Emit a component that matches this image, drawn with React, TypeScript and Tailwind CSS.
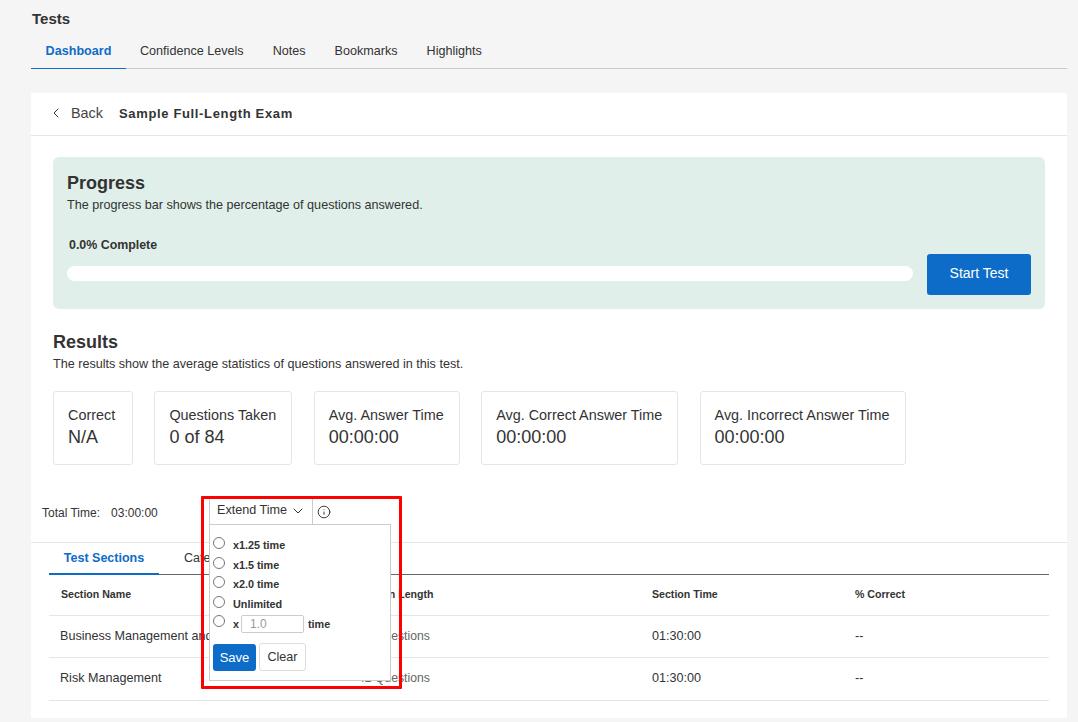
import { ChevronDown, ChevronLeft, Info } from "lucide-react";

const topTabs = ["Confidence Levels", "Notes", "Bookmarks", "Highlights"];

const stats = [
  { label: "Correct", value: "N/A", width: "w-[80px]" },
  { label: "Questions Taken", value: "0 of 84", width: "w-[138px]" },
  { label: "Avg. Answer Time", value: "00:00:00", width: "w-[146px]" },
  { label: "Avg. Correct Answer Time", value: "00:00:00", width: "w-[197px]" },
  { label: "Avg. Incorrect Answer Time", value: "00:00:00", width: "w-[206px]" },
];

const sections = [
  { name: "Business Management and Leadership", length: "42 Questions", time: "01:30:00", rowClass: "h-[42px]" },
  { name: "Risk Management", length: "42 Questions", time: "01:30:00", rowClass: "h-[43px] pb-[2px]" },
];

const extendOptions = ["x1.25 time", "x1.5 time", "x2.0 time", "Unlimited"];

function ExtendTimeMenu() {
  return (
    <div className="absolute left-[167px] top-[-9px] z-10 w-[182px]">
      {/* Trigger */}
      <div className="flex h-[27px] items-center">
        <div className="flex h-full w-[104px] items-center gap-[3px] border-x border-[#cccccc] bg-white pl-[7px] text-[12.6px] text-[#333333]">
          Extend Time
          <ChevronDown size={16} strokeWidth={1.5} />
        </div>
        <Info size={14} strokeWidth={1.6} className="ml-[4px] mt-[3px] text-[#333333]" />
      </div>

      {/* Panel */}
      <div className="flex h-[157px] flex-col border border-[#cccccc] bg-white pl-[3px] pt-[12px] text-[10.8px] font-bold text-[#333333]">
        {extendOptions.map((option) => (
          <label key={option} className="flex h-[19.5px] items-start gap-[8px]">
            <input type="radio" name="extend" className="m-0 h-[12px] w-[12px]" />
            <span>{option}</span>
          </label>
        ))}
        <label className="flex h-[20px] items-start gap-[8px]">
          <input type="radio" name="extend" className="m-0 h-[12px] w-[12px]" />
          <span className="mt-[1px]">x</span>
          <span className="-ml-[6px] flex h-[18px] w-[63px] items-center rounded-[2px] border border-[#cccccc] pl-[8px] text-[12px] font-normal text-[#9a9a9a]">
            1.0
          </span>
          <span className="-ml-[4px] mt-[1px]">time</span>
        </label>
        <div className="mt-[8px] flex items-start gap-[3px]">
          <button className="mt-[1px] h-[27px] w-[43px] rounded-[3px] bg-[#0d6cc7] text-[13px] font-normal text-white">
            Save
          </button>
          <button className="h-[28px] w-[47px] rounded-[3px] border border-[#dddddd] bg-white text-[12.6px] font-normal text-[#333333]">
            Clear
          </button>
        </div>
      </div>

      {/* Red annotation */}
      <div className="pointer-events-none absolute left-[-8px] top-[-1px] h-[193px] w-[201px] rounded-[1px] border-[3px] border-[#ff0000]" />
    </div>
  );
}

export default function App() {
  return (
    <div className="h-[722px] overflow-hidden bg-[#f5f5f5] pl-[31px] pr-[11px] pt-[10px] text-[#333333] [font-family:'Liberation_Sans',Arial,sans-serif]">
      <h1 className="pl-[1px] text-[15px] font-bold leading-[17px]">Tests</h1>

      {/* Top tabs */}
      <div className="mt-[6px] flex h-[36px] border-b border-[#cccccc] text-[12.6px]">
        <div className="-mb-px flex w-[95px] items-center justify-center border-b border-[#0d6cc7] pt-[2px] font-bold text-[#0d6cc7]">
          Dashboard
        </div>
        <div className="ml-[14px] flex gap-[29px]">
          {topTabs.map((tab) => (
            <div key={tab} className="flex items-center pt-[2px]">
              {tab}
            </div>
          ))}
        </div>
      </div>

      <div className="mt-[24px] h-[625px] bg-white">
        {/* Back header */}
        <div className="flex h-[43px] items-center border-b border-[#e5e5e5] pl-[21px]">
          <ChevronLeft size={16} strokeWidth={1.5} className="-ml-[4px] -mt-[2px]" />
          <span className="ml-[7px] text-[14.4px] text-[#444444]">Back</span>
          <span className="ml-[16px] text-[13px] font-bold tracking-[0.65px]">Sample Full-Length Exam</span>
        </div>

        {/* Progress */}
        <div className="mx-[22px] mt-[21px] flex h-[152px] rounded-[6px] bg-[#e0efe9] pl-[14px] pr-[14px]">
          <div className="flex-1 pt-[16px]">
            <h2 className="text-[18px] font-bold leading-[20px]">Progress</h2>
            <p className="mt-[5px] text-[12.6px] leading-[14px]">The progress bar shows the percentage of questions answered.</p>
            <p className="mt-[26px] pl-[2px] text-[12.4px] font-bold leading-[14px]">0.0% Complete</p>
            <div className="mt-[14px] h-[15px] rounded-full bg-white" />
          </div>
          <div className="ml-[14px] pt-[97px]">
            <button className="h-[41px] w-[104px] rounded-[3px] bg-[#0d6cc7] pb-[2px] text-[14px] text-white">Start Test</button>
          </div>
        </div>

        {/* Results */}
        <div className="mt-[22px] pl-[22px]">
          <h2 className="text-[18px] font-bold leading-[22px]">Results</h2>
          <p className="mt-[4px] text-[12.6px] leading-[14px]">The results show the average statistics of questions answered in this test.</p>
          <div className="mt-[20px] flex gap-[21.4px]">
            {stats.map((stat) => (
              <div key={stat.label} className={`${stat.width} h-[74px] rounded-[3px] border border-[#e5e5e5] pl-[14px] pt-[15px]`}>
                <div className="text-[14.4px] leading-[16px]">{stat.label}</div>
                <div className="mt-[3px] text-[18px] leading-[22px]">{stat.value}</div>
              </div>
            ))}
          </div>
        </div>

        {/* Total time */}
        <div className="relative ml-[11px] mt-[41px] flex h-[14px] items-center text-[12px]">
          <span>Total Time:</span>
          <span className="ml-[11px]">03:00:00</span>
          <ExtendTimeMenu />
        </div>

        {/* Sections */}
        <div className="mt-[22px] border-t border-[#e5e5e5] px-[18px]">
          <div className="flex h-[32px] border-b border-[#666666] text-[12.5px]">
            <div className="-mb-px flex w-[110px] items-center justify-center border-b-2 border-[#0d6cc7] font-bold text-[#0d6cc7]">
              Test Sections
            </div>
            <div className="ml-[25px] flex items-center">Categories</div>
          </div>

          <div className="grid h-[41px] grid-cols-[298px_294px_203px_205px] items-center border-b border-[#e5e5e5] text-[10.6px] font-bold">
            <span className="pl-[12px]">Section Name</span>
            <span className="pl-[10px]">Section Length</span>
            <span className="pl-[11px]">Section Time</span>
            <span className="pl-[11px]">% Correct</span>
          </div>
          {sections.map((row) => (
            <div
              key={row.name}
              className={`grid ${row.rowClass} grid-cols-[298px_294px_203px_205px] items-center border-b border-[#e5e5e5] text-[12.6px]`}
            >
              <span className="whitespace-nowrap pl-[11px]">{row.name}</span>
              <span className="pl-[11px] text-[12.2px] text-[#666666]">{row.length}</span>
              <span className="pl-[11px]">{row.time}</span>
              <span className="pl-[11px]">--</span>
            </div>
          ))}
        </div>
      </div>
    </div>
  );
}
